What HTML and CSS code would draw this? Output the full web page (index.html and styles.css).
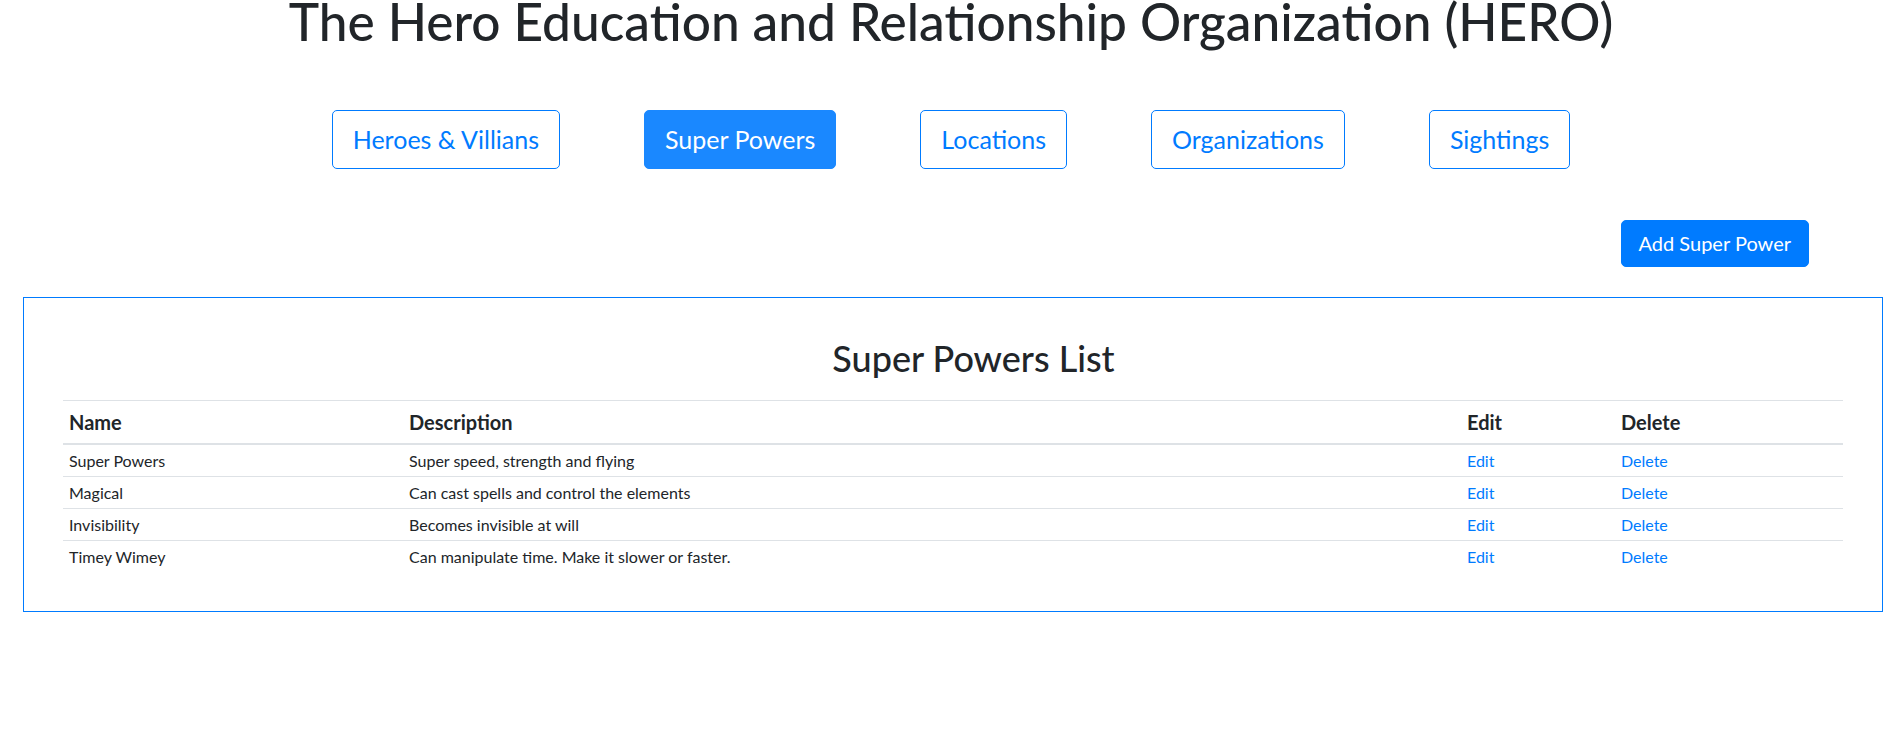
FILE: index.html
```html
<!DOCTYPE html>
<html lang="en">
<head>
<meta charset="utf-8">
<title>HERO - Super Powers</title>
<link rel="stylesheet" href="styles.css">
</head>
<body>
<header class="page-header">
  <h1 class="site-title">The Hero Education and Relationship Organization (HERO)</h1>
  <nav class="main-nav">
    <a class="nav-btn" href="#">Heroes &amp; Villians</a>
    <a class="nav-btn nav-btn-active" href="#">Super Powers</a>
    <a class="nav-btn" href="#">Locations</a>
    <a class="nav-btn" href="#">Organizations</a>
    <a class="nav-btn" href="#">Sightings</a>
  </nav>
</header>
<main>
  <div class="toolbar">
    <a class="btn-add" href="#">Add Super Power</a>
  </div>
  <section class="list-card">
    <h2 class="list-title">Super Powers List</h2>
    <table class="powers-table">
      <colgroup>
        <col class="col-name">
        <col class="col-desc">
        <col class="col-edit">
        <col class="col-delete">
      </colgroup>
      <thead>
        <tr><th>Name</th><th>Description</th><th>Edit</th><th>Delete</th></tr>
      </thead>
      <tbody>
        <tr><td>Super Powers</td><td>Super speed, strength and flying</td><td><a class="row-link" href="#">Edit</a></td><td><a class="row-link" href="#">Delete</a></td></tr>
        <tr><td>Magical</td><td>Can cast spells and control the elements</td><td><a class="row-link" href="#">Edit</a></td><td><a class="row-link" href="#">Delete</a></td></tr>
        <tr><td>Invisibility</td><td>Becomes invisible at will</td><td><a class="row-link" href="#">Edit</a></td><td><a class="row-link" href="#">Delete</a></td></tr>
        <tr><td>Timey Wimey</td><td>Can manipulate time. Make it slower or faster.</td><td><a class="row-link" href="#">Edit</a></td><td><a class="row-link" href="#">Delete</a></td></tr>
      </tbody>
    </table>
  </section>
</main>
</body>
</html>
```
FILE: styles.css
```css
* { box-sizing: border-box; }

body {
  margin: 0;
  font-family: Lato, "Open Sans", sans-serif;
  color: #212529;
  background: #fff;
}

.site-title {
  margin: 0;
  font-size: 51.4px;
  font-weight: 500;
  line-height: 42px;
  text-align: center;
}

.main-nav {
  display: flex;
  justify-content: center;
  gap: 84px;
  margin-top: 68px;
}

.nav-btn {
  display: inline-block;
  padding: 10px 20px;
  font-size: 25px;
  line-height: 37px;
  border: 1px solid #007bff;
  border-radius: 5px;
  color: #007bff;
  text-decoration: none;
}

.nav-btn-active {
  background: #1a88ff;
  border-color: #1a88ff;
  color: #fff;
}

.toolbar {
  display: flex;
  justify-content: flex-end;
  margin-top: 51px;
  padding-right: 93px;
}

.btn-add {
  display: inline-block;
  padding: 8px 17px;
  font-size: 20px;
  line-height: 29px;
  background: #007bff;
  border: 1px solid #007bff;
  border-radius: 5px;
  color: #fff;
  text-decoration: none;
}

.list-card {
  margin: 30px 19px 0 23px;
  border: 1px solid #007bff;
  padding: 39px;
}

.list-title {
  margin: 0 0 20px;
  padding-left: 41px;
  font-size: 36px;
  font-weight: 500;
  line-height: 43px;
  text-align: center;
}

.powers-table {
  width: 100%;
  table-layout: fixed;
  border-collapse: separate;
  border-spacing: 0;
}

.col-name { width: 340px; }
.col-desc { width: 1058px; }
.col-edit { width: 154px; }

.powers-table th {
  padding: 6px;
  font-size: 20px;
  line-height: 30px;
  font-weight: 700;
  text-align: left;
  border-top: 1px solid #dee2e6;
  border-bottom: 2px solid #dee2e6;
}

.powers-table td {
  padding: 5px 6px;
  font-size: 16px;
  line-height: 21px;
}

.powers-table tbody tr + tr td {
  border-top: 1px solid #dee2e6;
}

.row-link {
  color: #007bff;
  text-decoration: none;
}
```
